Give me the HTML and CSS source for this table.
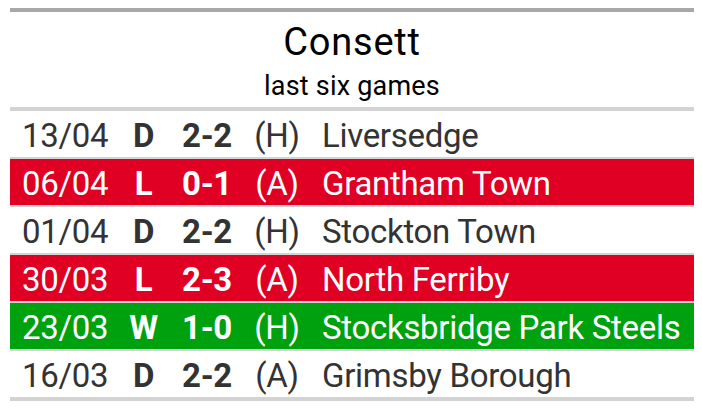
FILE: index.html
```html
<!DOCTYPE html>
<html>
<head>
<meta charset="utf-8">
<link rel="stylesheet" href="styles.css">
</head>
<body>
<div class="table">
  <div class="heading">
    <div class="title">Consett</div>
    <div class="subtitle">last six games</div>
  </div>
  <div class="rows">
    <div class="row draw"><span class="date">13/04</span><span class="res">D</span><span class="score">2-2</span><span class="venue">(H)</span><span class="team">Liversedge</span></div>
    <div class="row loss"><span class="date">06/04</span><span class="res">L</span><span class="score">0-1</span><span class="venue">(A)</span><span class="team">Grantham Town</span></div>
    <div class="row draw"><span class="date">01/04</span><span class="res">D</span><span class="score">2-2</span><span class="venue">(H)</span><span class="team">Stockton Town</span></div>
    <div class="row loss"><span class="date">30/03</span><span class="res">L</span><span class="score">2-3</span><span class="venue">(A)</span><span class="team">North Ferriby</span></div>
    <div class="row win"><span class="date">23/03</span><span class="res">W</span><span class="score">1-0</span><span class="venue">(H)</span><span class="team">Stocksbridge Park Steels</span></div>
    <div class="row draw"><span class="date">16/03</span><span class="res">D</span><span class="score">2-2</span><span class="venue">(A)</span><span class="team">Grimsby Borough</span></div>
  </div>
</div>
</body>
</html>
```

FILE: styles.css
```css
html, body {
  margin: 0;
  padding: 0;
  background: #ffffff;
}
body {
  padding: 8px 8px 0 10px;
  font-family: Roboto, "Liberation Sans", sans-serif;
}
.table {
  width: 684px;
  border-top: 4px solid #a8a8a8;
  border-bottom: 4px solid #d3d3d3;
}
.heading {
  height: 95px;
  box-sizing: border-box;
  border-bottom: 4px solid #d3d3d3;
  height: 99px;
  display: flex;
  flex-direction: column;
  align-items: center;
  color: #000;
}
.title {
  font-size: 38px;
  line-height: 38px;
  letter-spacing: 0.8px;
  margin-top: 11px;
}
.subtitle {
  font-size: 27px;
  line-height: 27px;
  letter-spacing: 0.2px;
  margin-top: 12px;
}
.row {
  display: grid;
  grid-template-columns: 109px 49px 78px 62px 1fr;
  height: 46px;
  align-items: center;
  font-size: 33px;
  letter-spacing: -0.3px;
  color: #333333;
  border-top: 2px solid #d3d3d3;
}
.row > span {
  line-height: 42px;
  padding-top: 4px;
}
.row:first-child {
  border-top: none;
}
.date {
  padding-left: 12px;
}
.res, .score {
  text-align: center;
  font-weight: 700;
}
.venue {
  text-align: center;
}
.team {
  padding-left: 14px;
  white-space: nowrap;
}
.loss {
  background: #df0024;
  color: #ffffff;
}
.win {
  background: #00a10e;
  color: #ffffff;
}
```
